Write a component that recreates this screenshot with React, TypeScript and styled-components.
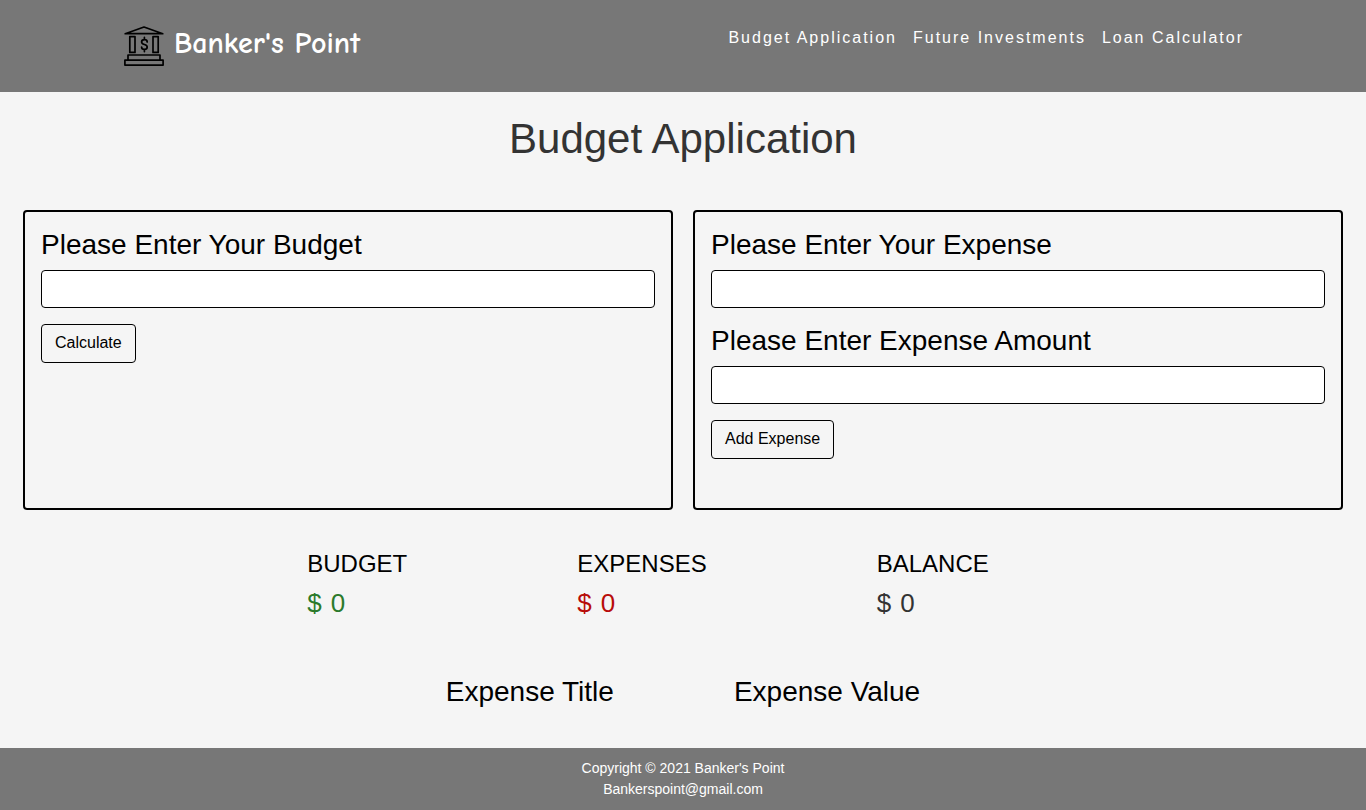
import { useState } from "react";
import type { FormEvent } from "react";
import styled, { createGlobalStyle } from "styled-components";

const GlobalStyle = createGlobalStyle`
  *, *::before, *::after { box-sizing: border-box; }
  body {
    margin: 0;
    background: #f5f5f5;
    color: #000;
    font-family: "Liberation Sans", Arial, sans-serif;
    font-size: 16px;
    line-height: 24px;
  }
`;

const Page = styled.div`
  display: flex;
  flex-direction: column;
  min-height: 100vh;
`;

const Header = styled.header`
  display: flex;
  justify-content: space-between;
  align-items: flex-start;
  flex-wrap: wrap;
  gap: 16px;
  padding: 26px 122px 26px 124px;
  background: #777;
`;

const Brand = styled.a`
  display: flex;
  align-items: flex-start;
  gap: 10px;
  height: 40px;
  color: #fff;
  font-family: "Comic Sans MS", "Comic Neue", "Open Sans", sans-serif;
  font-size: 30px;
  font-weight: 700;
  line-height: 36px;
  text-decoration: none;
`;

const Nav = styled.nav`
  display: flex;
  flex-wrap: wrap;
  gap: 16px;
`;

const NavLink = styled.a`
  color: #fff;
  letter-spacing: 2px;
  text-decoration: none;
`;

const Main = styled.main`
  flex: 1;
  padding: 22px 23px 36px;
`;

const Title = styled.h1`
  margin: 0 0 46px;
  color: #333;
  font-size: 42px;
  font-weight: 400;
  line-height: 50px;
  text-align: center;
`;

const Cards = styled.div`
  display: grid;
  grid-template-columns: repeat(2, minmax(0, 1fr));
  gap: 20px;
`;

const Card = styled.form`
  min-height: 300px;
  padding: 16px;
  border: 2px solid #000;
  border-radius: 4px;
`;

const Label = styled.label`
  display: block;
  margin-bottom: 8px;
  font-size: 28px;
  line-height: 34px;
`;

const Input = styled.input`
  display: block;
  width: 100%;
  height: 38px;
  margin-bottom: 16px;
  padding: 6px 12px;
  border: 1px solid #000;
  border-radius: 4px;
  background: #fff;
  font: inherit;
`;

const Button = styled.button`
  padding: 6px 13px 7px;
  border: 1px solid #000;
  border-radius: 4px;
  background: transparent;
  color: #000;
  font: inherit;
  cursor: pointer;
`;

const Summary = styled.section`
  display: flex;
  justify-content: center;
  gap: 170px;
  padding: 39px 70px 0 0;
`;

const StatName = styled.h2`
  margin: 0 0 8px;
  font-size: 24px;
  font-weight: 400;
  line-height: 30px;
  text-transform: uppercase;
`;

const StatValue = styled.p<{ $color: string }>`
  display: flex;
  gap: 9px;
  margin: 0;
  color: ${({ $color }) => $color};
  font-size: 26px;
  line-height: 32px;
`;

const Expenses = styled.table`
  margin: 56px auto 0;
  border-spacing: 0;
  font-size: 28px;
  line-height: 34px;

  th,
  td {
    padding: 0 60px;
    font-weight: 400;
    text-align: left;
  }
`;

const Footer = styled.footer`
  padding: 10px 16px;
  background: #777;
  color: #fff;
  font-size: 14px;
  line-height: 21px;
  text-align: center;

  p {
    margin: 0;
  }
`;

function BankIcon() {
  return (
    <svg width="40" height="40" viewBox="0 0 40 40" fill="none" stroke="#000" strokeWidth="1.7" strokeLinejoin="round" strokeLinecap="round" aria-hidden="true">
      <path d="M20 1 38.8 7.7H1.2Z" />
      <path d="M5.8 10.6h5.2v15.8H5.8zM29 10.6h5.2v15.8H29z" />
      <path d="M4 29h32v5H4zM.9 34.2h38.2v4.9H.9z" />
      <path d="M20.4 11.4v2.2M20.4 23.4v2.2M23.2 15.9c0-1.4-1.2-2.3-2.8-2.3s-2.8 1-2.8 2.4c0 3.2 5.6 1.8 5.6 5 0 1.4-1.2 2.4-2.8 2.4s-2.8-1-2.8-2.4" />
    </svg>
  );
}

interface Expense {
  title: string;
  amount: number;
}

export default function App() {
  const [budget, setBudget] = useState(0);
  const [expenses, setExpenses] = useState<Expense[]>([]);
  const spent = expenses.reduce((sum, item) => sum + item.amount, 0);

  const saveBudget = (event: FormEvent<HTMLFormElement>) => {
    event.preventDefault();
    const data = new FormData(event.currentTarget);
    setBudget(Number(data.get("budget")) || 0);
    event.currentTarget.reset();
  };

  const addExpense = (event: FormEvent<HTMLFormElement>) => {
    event.preventDefault();
    const data = new FormData(event.currentTarget);
    const title = String(data.get("title"));
    const amount = Number(data.get("amount")) || 0;
    setExpenses((list) => [...list, { title, amount }]);
    event.currentTarget.reset();
  };

  const stats = [
    { name: "Budget", value: budget, color: "#2b7a2b" },
    { name: "Expenses", value: spent, color: "#b80c09" },
    { name: "Balance", value: budget - spent, color: "#333" },
  ];

  return (
    <Page>
      <GlobalStyle />
      <Header>
        <Brand href="#">
          <BankIcon />
          Banker's Point
        </Brand>
        <Nav>
          <NavLink href="#budget">Budget Application</NavLink>
          <NavLink href="#investments">Future Investments</NavLink>
          <NavLink href="#loan">Loan Calculator</NavLink>
        </Nav>
      </Header>
      <Main>
        <Title>Budget Application</Title>
        <Cards>
          <Card onSubmit={saveBudget}>
            <Label htmlFor="budget-input">Please Enter Your Budget</Label>
            <Input id="budget-input" name="budget" type="number" />
            <Button type="submit">Calculate</Button>
          </Card>
          <Card onSubmit={addExpense}>
            <Label htmlFor="expense-title">Please Enter Your Expense</Label>
            <Input id="expense-title" name="title" type="text" />
            <Label htmlFor="expense-amount">Please Enter Expense Amount</Label>
            <Input id="expense-amount" name="amount" type="number" />
            <Button type="submit">Add Expense</Button>
          </Card>
        </Cards>
        <Summary>
          {stats.map((stat) => (
            <div key={stat.name}>
              <StatName>{stat.name}</StatName>
              <StatValue $color={stat.color}>
                <span>$</span>
                <span>{stat.value}</span>
              </StatValue>
            </div>
          ))}
        </Summary>
        <Expenses>
          <thead>
            <tr>
              <th scope="col">Expense Title</th>
              <th scope="col">Expense Value</th>
            </tr>
          </thead>
          <tbody>
            {expenses.map((item, index) => (
              <tr key={index}>
                <td>{item.title}</td>
                <td>{item.amount}</td>
              </tr>
            ))}
          </tbody>
        </Expenses>
      </Main>
      <Footer>
        <p>Copyright © 2021 Banker's Point</p>
        <p>Bankerspoint@gmail.com</p>
      </Footer>
    </Page>
  );
}
